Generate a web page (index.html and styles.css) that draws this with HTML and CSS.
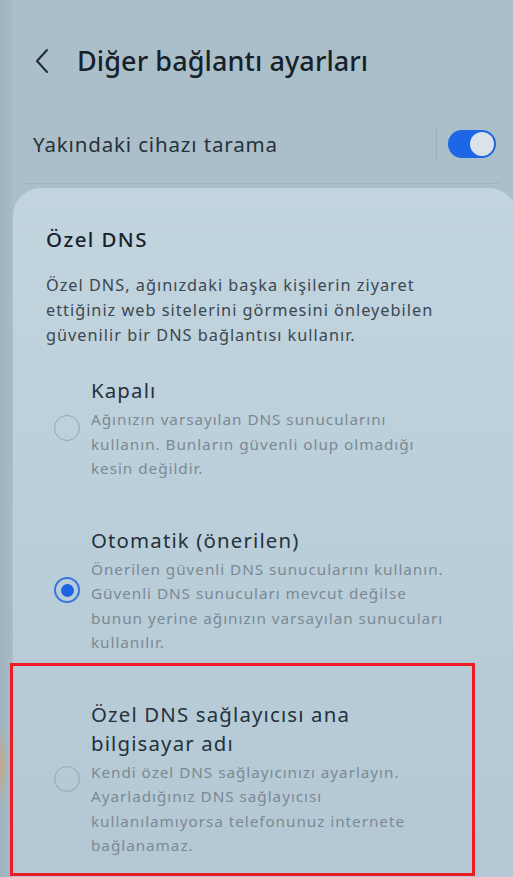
FILE: index.html
```html
<!DOCTYPE html>
<html lang="tr">
<head>
<meta charset="utf-8">
<title>Diğer bağlantı ayarları</title>
<link rel="stylesheet" href="styles.css">
</head>
<body>
<div class="screen">
  <header class="header">
    <svg class="back" width="16" height="26" viewBox="0 0 16 26" aria-hidden="true">
      <path d="M13 2 L3 13 L13 24" fill="none" stroke="#1f2a33" stroke-width="2" stroke-linecap="round" stroke-linejoin="round"/>
    </svg>
    <h1 class="title">Diğer bağlantı ayarları</h1>
  </header>

  <div class="toggle-row">
    <span class="toggle-label">Yakındaki cihazı tarama</span>
    <div class="toggle-wrap">
      <span class="vsep"></span>
      <span class="switch on"><span class="knob"></span></span>
    </div>
  </div>
  <div class="divider"></div>

  <section class="card">
    <h2 class="card-title">Özel DNS</h2>
    <p class="card-desc">Özel DNS, ağınızdaki başka kişilerin ziyaret<br>ettiğiniz web sitelerini görmesini önleyebilen<br>güvenilir bir DNS bağlantısı kullanır.</p>

    <div class="options">
      <div class="option">
        <span class="radio"></span>
        <div class="option-text">
          <div class="option-title">Kapalı</div>
          <div class="option-sub">Ağınızın varsayılan DNS sunucularını<br>kullanın. Bunların güvenli olup olmadığı<br>kesin değildir.</div>
        </div>
      </div>

      <div class="option">
        <span class="radio checked"></span>
        <div class="option-text">
          <div class="option-title">Otomatik (önerilen)</div>
          <div class="option-sub">Önerilen güvenli DNS sunucularını kullanın.<br>Güvenli DNS sunucuları mevcut değilse<br>bunun yerine ağınızın varsayılan sunucuları<br>kullanılır.</div>
        </div>
      </div>

      <div class="highlight">
        <div class="option">
          <span class="radio"></span>
          <div class="option-text">
            <div class="option-title">Özel DNS sağlayıcısı ana<br>bilgisayar adı</div>
            <div class="option-sub">Kendi özel DNS sağlayıcınızı ayarlayın.<br>Ayarladığınız DNS sağlayıcısı<br>kullanılamıyorsa telefonunuz internete<br>bağlanamaz.</div>
          </div>
        </div>
      </div>
    </div>
  </section>
</div>
</body>
</html>
```

FILE: styles.css
```css
* { box-sizing: border-box; }

html, body {
  margin: 0;
  padding: 0;
}

body {
  width: 513px;
  height: 877px;
  overflow: hidden;
  font-family: "Noto Sans", "Open Sans", sans-serif;
  background:
    radial-gradient(ellipse 8px 40px at 0 765px, rgba(214, 160, 110, 0.7), rgba(214, 160, 110, 0) 100%),
    linear-gradient(to right, #9fb3be 0, #a5b9c4 10px, #abbfca 13px, #abbfca 100%);
}

.screen {
  width: 513px;
  height: 877px;
}

/* top app bar */
.header {
  display: flex;
  align-items: center;
  height: 36px;
  margin-top: 43px;
  padding-left: 34px;
  gap: 27px;
}

.back { flex: none; }

.title {
  margin: 0;
  font-size: 27px;
  line-height: 36px;
  font-weight: 500;
  color: #17212a;
  letter-spacing: 0.1px;
}

/* nearby device scanning row */
.toggle-row {
  display: flex;
  align-items: center;
  justify-content: space-between;
  height: 28px;
  margin-top: 51px;
  padding: 0 17px 0 33px;
}

.toggle-label {
  font-size: 20.5px;
  line-height: 28px;
  letter-spacing: 0.85px;
  color: #26313a;
}

.toggle-wrap {
  display: flex;
  align-items: center;
  gap: 11px;
}

.vsep {
  width: 1px;
  height: 34px;
  background: #9db0bb;
}

.switch {
  position: relative;
  display: block;
  width: 48px;
  height: 28px;
  border-radius: 14px;
  background: #1d66e6;
}

.switch .knob {
  position: absolute;
  top: 2px;
  right: 2px;
  width: 24px;
  height: 24px;
  border-radius: 50%;
  background: #dbe3e8;
}

.divider {
  height: 1px;
  margin: 25px 13px 0 25px;
  background: #a0b4bf;
}

/* private DNS sheet */
.card {
  margin: 4px -4px 0 13px;
  padding-top: 38px;
  height: 700px;
  border-radius: 28px 28px 0 0;
  background: linear-gradient(to bottom, #c2d5df 0, #bcd0db 260px, #b3c8d4 100%);
}

.card-title {
  margin: 0;
  padding: 0 33px;
  font-size: 20.5px;
  line-height: 26px;
  font-weight: 500;
  letter-spacing: 1.4px;
  color: #18222b;
}

.card-desc {
  margin: 21px 0 0;
  padding: 0 33px;
  font-size: 16.3px;
  line-height: 25px;
  letter-spacing: 1px;
  color: #3b4750;
}

.options {
  display: flex;
  flex-direction: column;
  gap: 45px;
  margin-top: 28px;
}

.option {
  display: flex;
  align-items: center;
  gap: 11px;
  padding-left: 41px;
}

.radio {
  flex: none;
  width: 26px;
  height: 26px;
  border-radius: 50%;
  border: 1.6px solid #9aa5ad;
}

.radio.checked {
  border: 2.5px solid #3a74de;
  display: flex;
  align-items: center;
  justify-content: center;
}

.radio.checked::after {
  content: "";
  width: 13px;
  height: 13px;
  border-radius: 50%;
  background: #1e63e6;
}

.option-title {
  font-size: 20.4px;
  line-height: 29px;
  letter-spacing: 1.15px;
  color: #25313b;
}

.option-sub {
  margin-top: 2px;
  font-size: 15.3px;
  line-height: 24.5px;
  letter-spacing: 0.95px;
  color: #7b8993;
}

/* annotated option frame */
.highlight {
  margin: -37px 0 0 -3px;
  width: 465px;
  padding: 34px 0 15px;
  border: 3px solid #ec1b24;
}
```
